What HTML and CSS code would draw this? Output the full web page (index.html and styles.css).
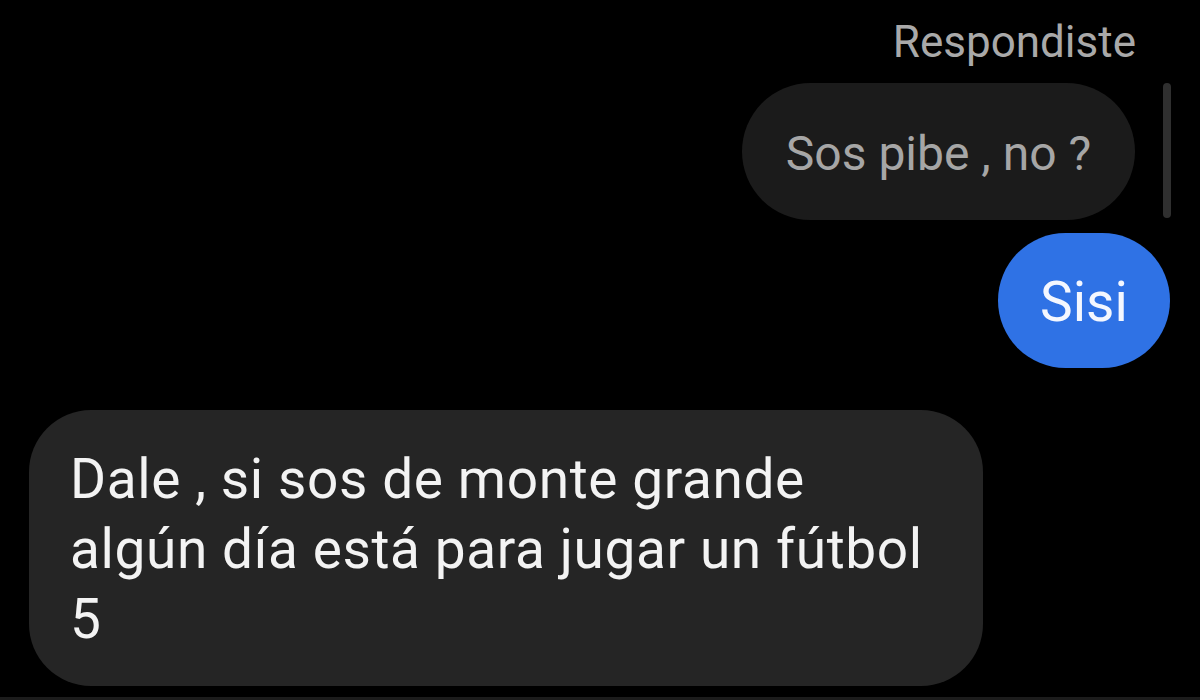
FILE: index.html
```html
<!DOCTYPE html>
<html lang="es">
<head>
<meta charset="utf-8">
<title>Chat</title>
<link rel="stylesheet" href="styles.css">
</head>
<body>
<main class="chat">
  <div class="reply-label">Respondiste</div>
  <div class="quote-row">
    <div class="quote-bubble">Sos pibe , no ?</div>
    <div class="quote-bar"></div>
  </div>
  <div class="sent-row">
    <div class="sent-bubble">Sisi</div>
  </div>
  <div class="recv-row">
    <div class="recv-bubble">Dale , si sos de monte grande<br>algún día está para jugar un fútbol<br>5</div>
  </div>
  <div class="bottom-line"></div>
</main>
</body>
</html>
```

FILE: styles.css
```css
html, body {
  margin: 0;
  padding: 0;
  background: #000;
  width: 1200px;
  height: 700px;
  overflow: hidden;
}

.chat {
  display: flex;
  flex-direction: column;
  font-family: Roboto, "Noto Sans", "Liberation Sans", sans-serif;
  padding-top: 17px;
}

.reply-label {
  align-self: flex-end;
  padding-right: 64px;
  font-size: 44px;
  line-height: 50px;
  color: #a9a9a9;
}

.quote-row {
  display: flex;
  justify-content: flex-end;
  align-items: flex-start;
  gap: 28px;
  padding-right: 29px;
  margin-top: 16px;
}

.quote-bubble {
  box-sizing: border-box;
  height: 137px;
  width: 393px;
  display: flex;
  align-items: center;
  justify-content: center;
  border-radius: 69px;
  background: #1b1b1b;
  color: #a6a6a6;
  font-size: 48px;
  padding-top: 4px;
}

.quote-bar {
  width: 8px;
  height: 135px;
  border-radius: 4px;
  background: #2f2f2f;
}

.sent-row {
  display: flex;
  justify-content: flex-end;
  padding-right: 30px;
  margin-top: 13px;
}

.sent-bubble {
  box-sizing: border-box;
  width: 172px;
  height: 135px;
  display: flex;
  align-items: center;
  justify-content: center;
  border-radius: 68px;
  background: #2f72e5;
  color: #f4f7ff;
  font-size: 55px;
  padding-top: 2px;
}

.recv-row {
  display: flex;
  padding-left: 29px;
  margin-top: 42px;
}

.recv-bubble {
  box-sizing: border-box;
  width: 954px;
  height: 276px;
  border-radius: 62px;
  background: #252525;
  color: #f3f3f3;
  font-size: 55px;
  letter-spacing: 0.6px;
  line-height: 70px;
  padding: 34px 40px 0 41px;
}

.bottom-line {
  margin-top: 11px;
  height: 3px;
  background: #1c1c1c;
}
```
